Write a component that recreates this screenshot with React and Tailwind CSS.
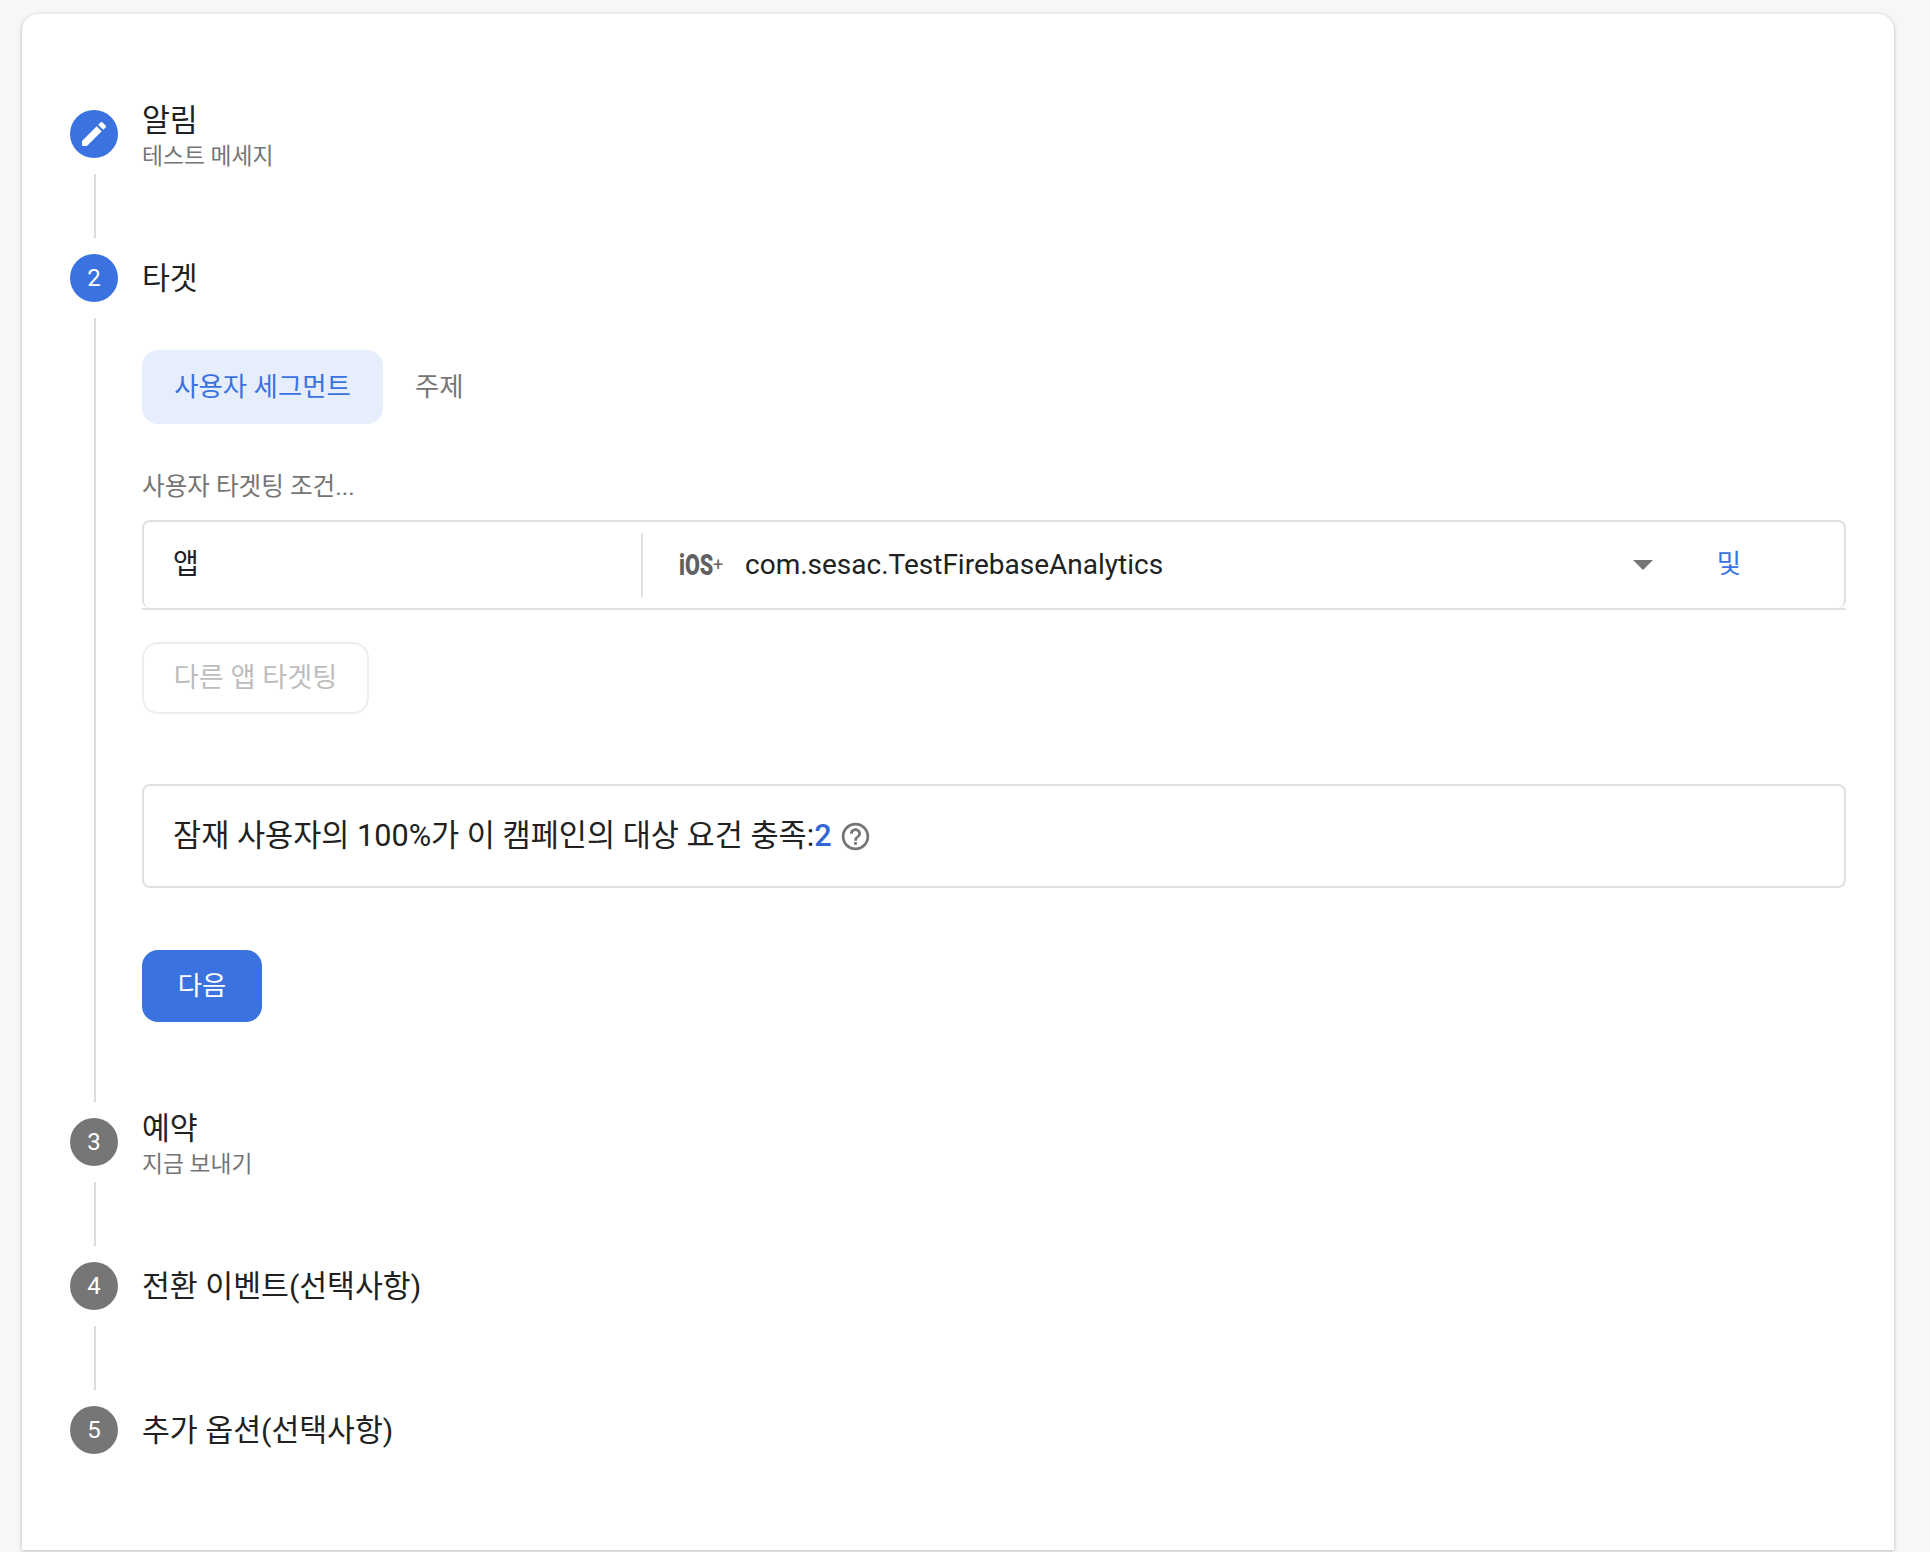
const FONT = 'font-["Roboto","Noto_Sans_CJK_KR",sans-serif]';

function Circle({ children, active }) {
  return (
    <div className={`flex h-12 w-12 shrink-0 items-center justify-center rounded-full text-[24px] text-white ${active ? "bg-[#3a72e0]" : "bg-[#767676]"}`}>
      {children}
    </div>
  );
}

function Step({ n, active, title, sub }) {
  return (
    <div className="flex h-12 items-center gap-6">
      <Circle active={active}>{n}</Circle>
      <div className={`flex flex-col ${sub ? "pt-[5px]" : "pt-[2px]"}`}>
        <div className="text-[30.3px] leading-[40px] text-[#212121]">{title}</div>
        {sub && <div className="text-[22.8px] leading-[32px] text-[#757575]">{sub}</div>}
      </div>
    </div>
  );
}

function Line({ h }) {
  return (
    <div className="py-4 pl-6">
      <div className={`w-0.5 bg-[#dedede] ${h}`} />
    </div>
  );
}

function Pencil() {
  return (
    <svg width="32" height="32" viewBox="0 0 24 24" fill="#fff">
      <path d="M3 17.25V21h3.75L17.81 9.94l-3.75-3.75L3 17.25zM20.71 7.04c.39-.39.39-1.02 0-1.41l-2.34-2.34c-.39-.39-1.02-.39-1.41 0l-1.83 1.83 3.75 3.75 1.83-1.83z" />
    </svg>
  );
}

function Help() {
  return (
    <svg width="33" height="33" viewBox="0 0 24 24" fill="#757575">
      <path d="M11 18h2v-2h-2v2zm1-16C6.48 2 2 6.48 2 12s4.48 10 10 10 10-4.48 10-10S17.52 2 12 2zm0 18c-4.41 0-8-3.59-8-8s3.59-8 8-8 8 3.59 8 8-3.59 8-8 8zm0-14c-2.21 0-4 1.79-4 4h2c0-1.1.9-2 2-2s2 .9 2 2c0 2-3 1.75-3 5h2c0-2.25 3-2.5 3-5 0-2.21-1.79-4-4-4z" />
    </svg>
  );
}

export default function App() {
  return (
    <div className={`h-[1552px] w-[1930px] overflow-hidden bg-[#f6f7f9] pt-[14px] pl-[22px] ${FONT}`}>
      <div className="h-[1536px] w-[1872px] rounded-t-2xl bg-white pt-24 pr-[48px] pl-12 shadow-[0_1px_4px_rgba(0,0,0,0.25)]">
        <Step active n={<Pencil />} title="알림" sub="테스트 메세지" />
        <Line h="h-16" />
        <Step active n="2" title="타겟" />
        <div className="flex">
          <Line h="h-[784px]" />
          <div className="ml-[46px] flex-1 pt-12">
            <div className="flex items-center">
              <div className="flex h-[74px] w-[241px] items-center justify-center rounded-2xl bg-[#e6edfb] pt-0.5 text-[26.4px] text-[#3a72e0]">사용자 세그먼트</div>
              <div className="ml-8 pt-0.5 text-[26.4px] text-[#757575]">주제</div>
            </div>
            <div className="mt-[47px] text-[24.6px] leading-[32px] text-[#757575]">사용자 타겟팅 조건...</div>
            <div className="mt-[17px] border-b-2 border-[#e0e0e0]">
              <div className="flex h-[88px] items-center rounded-lg border-x-2 border-t-2 border-[#e0e0e0] text-[28px] text-[#212121]">
                <div className="w-[497px] pl-[29px]">앱</div>
                <div className="h-16 w-0.5 bg-[#e0e0e0]" />
                <div className="ml-9 flex w-[66px] items-center text-[#616161]">
                  <span className="inline-block w-[34px] origin-left scale-x-[0.72] text-[30px] leading-none font-black">iOS</span>
                  <span className="text-[18px] leading-none font-normal">+</span>
                </div>
                <div className="flex-1">com.sesac.TestFirebaseAnalytics</div>
                <div className="h-0 w-0 border-x-[10px] border-t-[10px] border-x-transparent border-t-[#757575]" />
                <div className="mr-[103px] ml-[64px] text-[26.4px] text-[#3a72e0]">및</div>
              </div>
            </div>
            <div className="mt-[32px] flex h-[72px] w-[227px] items-center justify-center rounded-2xl border-2 border-[#eeeeee] text-[27.2px] text-[#bdbdbd]">다른 앱 타겟팅</div>
            <div className="mt-[70px] flex h-[104px] items-center rounded-lg border-2 border-[#e0e0e0] pl-[29px] text-[30.6px] text-[#212121]">
              <span>잠재 사용자의 100%가 이 캠페인의 대상 요건 충족:</span>
              <span className="font-medium text-[#3367d6]">2</span>
              <span className="ml-[7px]"><Help /></span>
            </div>
            <div className="mt-[62px] flex h-[72px] w-[120px] items-center justify-center rounded-2xl bg-[#3a72e0] pt-0.5 text-[26.4px] text-white">다음</div>
          </div>
        </div>
        <Step n="3" title="예약" sub="지금 보내기" />
        <Line h="h-16" />
        <Step n="4" title="전환 이벤트(선택사항)" />
        <Line h="h-16" />
        <Step n="5" title="추가 옵션(선택사항)" />
      </div>
    </div>
  );
}
